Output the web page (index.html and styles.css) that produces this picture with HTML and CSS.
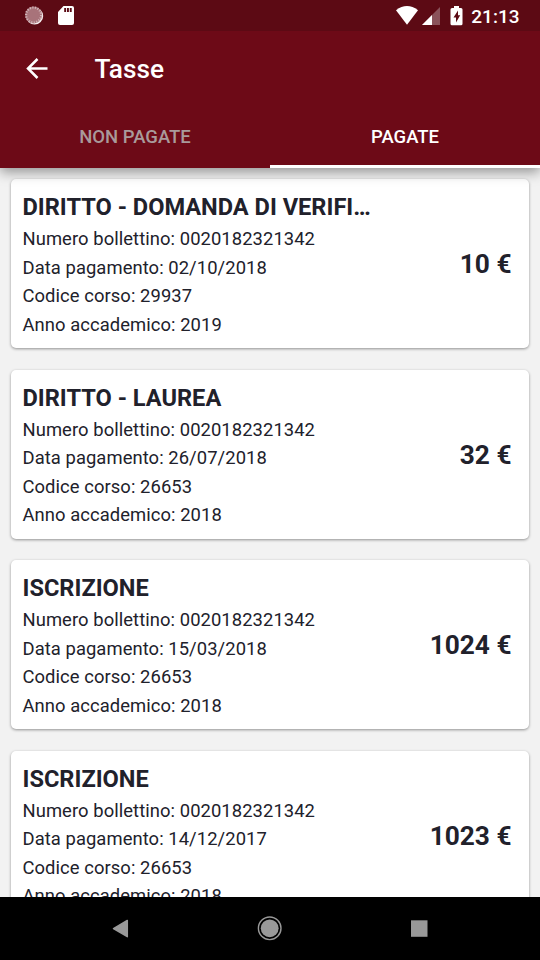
FILE: index.html
```html
<!DOCTYPE html>
<html lang="it">
<head>
<meta charset="utf-8">
<title>Tasse</title>
<link rel="stylesheet" href="styles.css">
</head>
<body>
<div class="screen">
  <header class="header">
    <div class="status">
      <svg class="status-left" width="80" height="31" viewBox="0 0 80 31">
        <circle cx="34.6" cy="16" r="8.6" fill="#f6eff0"/>
        <circle cx="33.6" cy="15" r="8.4" fill="#a8737a"/>
        <circle cx="33.6" cy="15" r="7.5" fill="none" stroke="#d0b4b8" stroke-width="2.2" stroke-dasharray="1.2 1.4"/>
        <path d="M63.5 6H72q2 0 2 2v15q0 2-2 2H60q-2 0-2-2V12z" fill="#fff"/>
        <path d="M64.2 8h1.9v4h-1.9zM67 8h1.9v4H67zM69.8 8h1.9v4h-1.9z" fill="#5c0a14"/>
      </svg>
      <svg class="status-right" width="76" height="31" viewBox="390 0 76 31">
        <path d="M396 10.2Q407 2 418 10.2L407 24.8z" fill="#fff"/>
        <path d="M440 7v18h-18z" fill="#8a525a"/>
        <path d="M432 15v10h-10z" fill="#fff"/>
        <path d="M454 6h5v2h2q1.5 0 1.5 1.5v14.2q0 1.5-1.5 1.5h-9q-1.5 0-1.5-1.5V9.5Q450.5 8 452 8h2z" fill="#fff"/>
        <path d="M458 10.5v4.7h2.2L456 22.5v-5h-2.500z" fill="#5c0a14"/>
      </svg>
      <span class="clock">21:13</span>
    </div>
    <div class="toolbar">
      <svg class="back" width="24" height="24" viewBox="0 0 24 24"><path d="M22.5 11.500H3M12.500 2L3 11.500L12.500 21" fill="none" stroke="#fff" stroke-width="2.500"/></svg>
      <h1 class="heading">Tasse</h1>
    </div>
    <nav class="tabs">
      <div class="tab">NON PAGATE</div>
      <div class="tab active">PAGATE</div>
    </nav>
  </header>
  <main class="list">
    <article class="card">
      <div class="details">
        <h2 class="name">DIRITTO - DOMANDA DI VERIFI…</h2>
        <p>Numero bollettino: 0020182321342</p>
        <p>Data pagamento: 02/10/2018</p>
        <p>Codice corso: 29937</p>
        <p>Anno accademico: 2019</p>
      </div>
      <div class="price">10 €</div>
    </article>
    <article class="card">
      <div class="details">
        <h2 class="name">DIRITTO - LAUREA</h2>
        <p>Numero bollettino: 0020182321342</p>
        <p>Data pagamento: 26/07/2018</p>
        <p>Codice corso: 26653</p>
        <p>Anno accademico: 2018</p>
      </div>
      <div class="price">32 €</div>
    </article>
    <article class="card">
      <div class="details">
        <h2 class="name">ISCRIZIONE</h2>
        <p>Numero bollettino: 0020182321342</p>
        <p>Data pagamento: 15/03/2018</p>
        <p>Codice corso: 26653</p>
        <p>Anno accademico: 2018</p>
      </div>
      <div class="price">1024 €</div>
    </article>
    <article class="card">
      <div class="details">
        <h2 class="name">ISCRIZIONE</h2>
        <p>Numero bollettino: 0020182321342</p>
        <p>Data pagamento: 14/12/2017</p>
        <p>Codice corso: 26653</p>
        <p>Anno accademico: 2018</p>
      </div>
      <div class="price">1023 €</div>
    </article>
  </main>
  <footer class="navbar">
    <svg width="540" height="63" viewBox="0 897 540 63">
      <path d="M127.3 920.5v16.2L113.5 928.6z" fill="#999" stroke="#999" stroke-width="1.5" stroke-linejoin="round"/>
      <circle cx="269.7" cy="928.3" r="11.3" fill="none" stroke="#999" stroke-width="1.4"/>
      <circle cx="269.7" cy="928.3" r="8.9" fill="#999"/>
      <path d="M411 920.3h16.5v16.5H411z" fill="#999"/>
    </svg>
  </footer>
</div>
</body>
</html>
```
FILE: styles.css
```css
* {
  box-sizing: border-box;
}

body,
h1,
h2,
p {
  margin: 0;
}

body {
  font-family: Roboto, sans-serif;
  background: #f2f2f2;
}

.screen {
  display: flex;
  flex-direction: column;
  width: 540px;
  height: 960px;
  overflow: hidden;
}

.header {
  position: relative;
  flex: none;
  height: 168px;
  background: #6d0a17;
  color: #fff;
  box-shadow: 0 4px 12px rgba(0, 0, 0, 0.4);
}

.status {
  display: flex;
  align-items: center;
  height: 31px;
  padding-right: 20.5px;
  background: #5c0a14;
}

.status-right {
  margin-left: auto;
}

.clock {
  margin-left: 5.5px;
  padding-top: 3px;
  font-size: 19px;
  font-weight: 500;
  line-height: 28px;
}

.toolbar {
  display: flex;
  align-items: center;
  height: 75px;
  padding-left: 25px;
}

.heading {
  margin-left: 45.5px;
  padding-top: 1px;
  font-size: 26.25px;
  font-weight: 500;
}

.tabs {
  display: flex;
  height: 62px;
}

.tab {
  flex: 1;
  border-bottom: 3px solid transparent;
  font-size: 18.5px;
  font-weight: 500;
  line-height: 62px;
  text-align: center;
  color: #a99a9b;
}

.tab.active {
  border-bottom-color: #fff;
  color: #fff;
}

.list {
  flex: 1;
  min-height: 0;
  padding: 11px 11px 0;
  overflow: hidden;
}

.card {
  display: flex;
  align-items: center;
  justify-content: space-between;
  height: 169px;
  margin-bottom: 21.5px;
  padding: 0 17.5px 0 11.5px;
  border-radius: 5px;
  background: #fff;
  color: #21212b;
  box-shadow: 0 1px 3px rgba(0, 0, 0, 0.4);
}

.details {
  padding-top: 1px;
}

.name {
  font-size: 23.6px;
  font-weight: 700;
  line-height: 34px;
}

.details p {
  font-size: 18.4px;
  line-height: 28.5px;
  letter-spacing: 0.07px;
  transform: translateY(0.5px);
}

.price {
  padding-top: 1px;
  font-size: 26.25px;
  font-weight: 700;
}

.navbar {
  flex: none;
  height: 63px;
  background: #000;
}

.navbar svg {
  display: block;
}
```
